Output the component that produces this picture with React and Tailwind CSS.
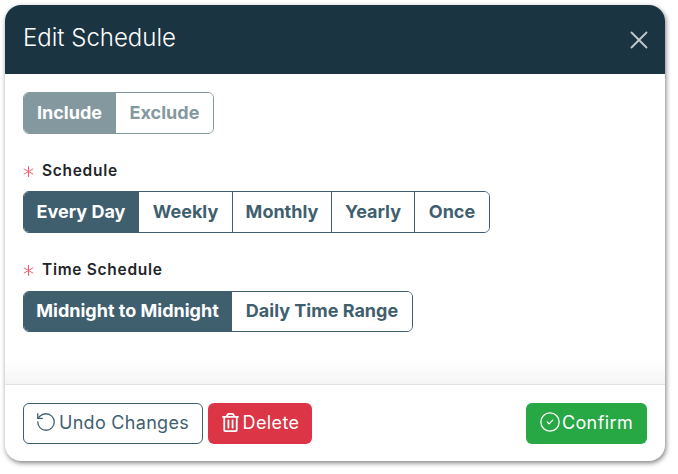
import React from "react";
import { X, RotateCcw, CircleCheck } from "lucide-react";
import { FaRegTrashAlt } from "react-icons/fa";

function Segment({ items, widths, muted, short }) {
  const border = muted ? "border-[#84989f]" : "border-[#3f5f6f]";
  const text = muted ? "text-[#84989f]" : "text-[#3f5f6f]";
  const fill = muted ? "bg-[#84989f]" : "bg-[#3f5f6f]";
  return (
    <div className={`flex w-fit ${short ? "h-[41px]" : "h-[42px]"} rounded-[6px] border ${border} overflow-hidden`}>
      {items.map((item, i) => (
        <div
          key={item}
          style={{ width: widths[i] }}
          className={`flex items-center justify-center pb-[2px] text-[18px] font-bold ${i > 0 ? `border-l ${border}` : ""} ${i === 0 ? `${fill} text-white` : `bg-white ${text}`}`}
        >
          {item}
        </div>
      ))}
    </div>
  );
}

function Label({ children }) {
  return (
    <div className="flex items-center h-[20px] gap-[8px] text-[15.5px] font-semibold tracking-[0.7px] text-[#1f2529]">
      <svg width="11" height="11" viewBox="0 0 11 11" className="text-[#ef5f70] mt-[1px]" stroke="currentColor" strokeWidth="1" fill="none">
        <path d="M5.5 0v11M0.8 2.8l9.4 5.4M10.2 2.8L0.8 8.2" />
      </svg>
      <span>{children}</span>
    </div>
  );
}

export default function App() {
  return (
    <div className="bg-white w-[678px] h-[474px] pt-[5px] pl-[5px]" style={{ fontFamily: '"Inter", "Noto Sans", sans-serif' }}>
      <div className="w-[660px] h-[456px] bg-white rounded-[16px] shadow-[1px_2px_5px_rgba(0,0,0,0.5)] flex flex-col overflow-hidden">
        <div className="h-[69px] shrink-0 bg-[#1a3441] flex items-center justify-between pl-[18px] pr-[11px]">
          <span className="text-[24px] font-light text-white pb-[3px]">Edit Schedule</span>
          <X size={30} strokeWidth={1.5} className="text-[#c0c8cc]" />
        </div>
        <div className="flex-1 flex flex-col px-[18px] pt-[18px] bg-gradient-to-b from-white from-[92%] to-[#f5f5f5]">
          <Segment muted items={["Include", "Exclude"]} widths={[91, 98]} />
          <div className="mt-[27px]"><Label>Schedule</Label></div>
          <div className="mt-[10px]">
            <Segment items={["Every Day", "Weekly", "Monthly", "Yearly", "Once"]} widths={[114, 94, 99, 83, 75]} />
          </div>
          <div className="mt-[27px]"><Label>Time Schedule</Label></div>
          <div className="mt-[11px]">
            <Segment short items={["Midnight to Midnight", "Daily Time Range"]} widths={[207, 181]} />
          </div>
        </div>
        <div className="h-[77px] shrink-0 border-t border-[#e2e2e2] flex items-start justify-between pt-[18px] px-[18px]">
          <div className="flex gap-[5px]">
            <button className="w-[180px] h-[41px] rounded-[6px] border border-[#3f5f6f] text-[#3f5f6f] bg-white text-[18px] leading-[18px] flex items-center justify-center gap-[2px] pr-[2px] tracking-[0.3px]">
              <RotateCcw size={22} strokeWidth={1.4} className="mb-[3px]" />
              <span className="pb-[2px]">Undo Changes</span>
            </button>
            <button className="w-[104px] h-[41px] rounded-[6px] bg-[#dc3545] text-white text-[18px] leading-[18px] flex items-center justify-center gap-[3px] tracking-[0.4px]">
              <FaRegTrashAlt size={19} className="mb-[2px]" />
              <span className="pb-[2px]">Delete</span>
            </button>
          </div>
          <button className="w-[121px] h-[41px] rounded-[6px] bg-[#28a745] text-white text-[18px] leading-[18px] flex items-center justify-center gap-[1px] pr-[1px] tracking-[0.4px]">
            <CircleCheck size={22} strokeWidth={1.4} className="mb-[3px]" />
            <span className="pb-[2px]">Confirm</span>
          </button>
        </div>
      </div>
    </div>
  );
}
